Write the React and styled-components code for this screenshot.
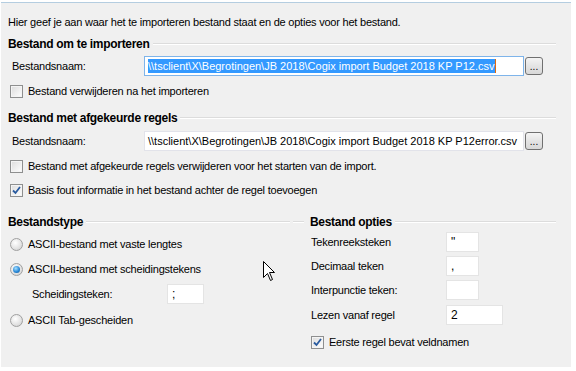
import React from "react";
import styled, { createGlobalStyle, css } from "styled-components";

const Global = createGlobalStyle`
  html, body { margin: 0; padding: 0; background: #ffffff; }
  body { font-family: "Liberation Sans", Tahoma, sans-serif; font-size: 11px; color: #000; letter-spacing: -0.22px; }
`;

const Panel = styled.div`
  position: relative;
  width: 570px;
  height: 365px;
  margin: 2px 5px 3px 1px;
  border-top: 1px solid #b4cde0;
  background: #f0f0f0;
  box-sizing: border-box;
  padding-top: 12px;
  display: flex;
  flex-direction: column;
`;

const Intro = styled.div`
  margin-left: 7px;
  line-height: 14px;
  height: 14px;
`;

const Section = styled.div`
  display: flex;
  flex-direction: column;
  margin-top: ${(p) => p.$mt || 0}px;
`;

const GroupHeader = styled.div`
  display: flex;
  align-items: center;
  height: 14px;
  line-height: 14px;
  font-weight: bold;
  font-size: 12px;
  letter-spacing: -0.3px;
  padding-left: ${(p) => p.$pl ?? 7}px;
  margin-right: ${(p) => p.$mr ?? 15}px;
  white-space: nowrap;
  ${(p) =>
    p.$leadLine &&
    css`
      &::before {
        content: "";
        width: 11px;
        margin-right: 6px;
        border-top: 1px solid #dcdcdc;
        border-bottom: 1px solid #ffffff;
      }
    `}
  &::after {
    content: "";
    flex: 1;
    margin-left: 3px;
    border-top: 1px solid #dcdcdc;
    border-bottom: 1px solid #ffffff;
  }
`;

const FileRow = styled.div`
  display: flex;
  align-items: center;
  margin-top: ${(p) => p.$mt}px;
  padding-left: 11px;
  height: 20px;
`;

const Label = styled.div`
  width: ${(p) => p.$w}px;
  flex: none;
  white-space: nowrap;
`;

const PathInput = styled.div`
  width: 380px;
  height: 20px;
  box-sizing: border-box;
  background: #fff;
  border: 1px solid ${(p) => (p.$focus ? "#7eb4ea" : "#e2e3ea")};
  padding: 0 0 0 3px;
  display: flex;
  align-items: center;
  white-space: nowrap;
  overflow: hidden;
  letter-spacing: 0;
`;

const Selected = styled.span`
  background: #3399ff;
  color: #fff;
  line-height: 14px;
  border-right: 1px solid #e06a10;
`;

const BrowseButton = styled.div`
  width: 18px;
  height: 18px;
  margin-left: 1px;
  box-sizing: border-box;
  border: 1px solid #707070;
  border-radius: 3px;
  background: linear-gradient(#f4f4f4, #e4e4e4 50%, #d8d8d8);
  display: flex;
  justify-content: center;
  align-items: flex-end;
  font-size: 10px;
  line-height: 12px;
  padding-bottom: 1px;
  letter-spacing: 0;
`;

const CheckRow = styled.div`
  display: flex;
  align-items: center;
  height: 16px;
  margin-top: ${(p) => p.$mt}px;
  padding-left: ${(p) => p.$pl ?? 9}px;
  gap: 5px;
  white-space: nowrap;
`;

const Box = styled.span`
  width: 13px;
  height: 13px;
  box-sizing: border-box;
  border: 1px solid #8e8f8f;
  background: linear-gradient(135deg, #dcdcdc, #f4f4f4 70%, #ffffff);
  box-shadow: inset 0 0 0 1px #f4f4f4;
  flex: none;
  display: flex;
  align-items: center;
  justify-content: center;
`;

const Radio = styled.span`
  width: 13px;
  height: 13px;
  box-sizing: border-box;
  border-radius: 50%;
  border: 1px solid #a0a0a0;
  background: radial-gradient(circle at 40% 35%, #ffffff, #e2e2e2 60%, #c8c8c8);
  flex: none;
  display: flex;
  align-items: center;
  justify-content: center;
  &::after {
    content: "";
    display: ${(p) => (p.$on ? "block" : "none")};
    width: 7px;
    height: 7px;
    border-radius: 50%;
    background: radial-gradient(circle at 40% 35%, #a6e0ff, #2b8ad8 55%, #0d4f8f);
  }
`;

const Columns = styled.div`
  display: grid;
  grid-template-columns: 289px 1fr;
  margin-top: 17px;
  padding-right: 15px;
`;

const Column = styled.div`
  display: flex;
  flex-direction: column;
`;

const SubRow = styled.div`
  display: flex;
  align-items: center;
  height: 20px;
  margin-top: ${(p) => p.$mt}px;
  padding-left: ${(p) => p.$pl}px;
`;

const SmallInput = styled.div`
  width: ${(p) => p.$w}px;
  height: 20px;
  box-sizing: border-box;
  background: #fff;
  border: 1px solid #e4e4e4;
  padding-left: 4px;
  display: flex;
  align-items: center;
  font-size: 12px;
`;

const Cursor = styled.svg`
  position: absolute;
  left: 262px;
  top: 258px;
`;

function Check({ on }) {
  return (
    <Box>
      {on && (
        <svg width="9" height="9" viewBox="0 0 9 9">
          <path d="M1 4.5 L3.5 7 L8 1" fill="none" stroke="#2a5b9f" strokeWidth="1.8" />
        </svg>
      )}
    </Box>
  );
}

export default function App() {
  return (
    <>
      <Global />
      <Panel>
        <Intro>Hier geef je aan waar het te importeren bestand staat en de opties voor het bestand.</Intro>

        <Section $mt={8}>
          <GroupHeader>Bestand om te importeren</GroupHeader>
          <FileRow $mt={5}>
            <Label $w={132}>Bestandsnaam:</Label>
            <PathInput $focus>
              <Selected>\\tsclient\X\Begrotingen\JB 2018\Cogix import Budget 2018 KP P12.csv</Selected>
            </PathInput>
            <BrowseButton>...</BrowseButton>
          </FileRow>
          <CheckRow $mt={7}>
            <Check />
            Bestand verwijderen na het importeren
          </CheckRow>
        </Section>

        <Section $mt={12}>
          <GroupHeader>Bestand met afgekeurde regels</GroupHeader>
          <FileRow $mt={6}>
            <Label $w={132}>Bestandsnaam:</Label>
            <PathInput>\\tsclient\X\Begrotingen\JB 2018\Cogix import Budget 2018 KP P12error.csv</PathInput>
            <BrowseButton>...</BrowseButton>
          </FileRow>
          <CheckRow $mt={7}>
            <Check />
            Bestand met afgekeurde regels verwijderen voor het starten van de import.
          </CheckRow>
          <CheckRow $mt={8}>
            <Check on />
            Basis fout informatie in het bestand achter de regel toevoegen
          </CheckRow>
        </Section>

        <Columns>
          <Column>
            <GroupHeader $mr={0}>Bestandstype</GroupHeader>
            <CheckRow $mt={7}>
              <Radio />
              ASCII-bestand met vaste lengtes
            </CheckRow>
            <CheckRow $mt={9}>
              <Radio $on />
              ASCII-bestand met scheidingstekens
            </CheckRow>
            <SubRow $mt={7} $pl={31}>
              <Label $w={135}>Scheidingsteken:</Label>
              <SmallInput $w={37}>;</SmallInput>
            </SubRow>
            <CheckRow $mt={8}>
              <Radio />
              ASCII Tab-gescheiden
            </CheckRow>
          </Column>
          <Column>
            <GroupHeader $pl={3} $mr={0} $leadLine>
              Bestand opties
            </GroupHeader>
            <SubRow $mt={3} $pl={21}>
              <Label $w={135}>Tekenreeksteken</Label>
              <SmallInput $w={33}>"</SmallInput>
            </SubRow>
            <SubRow $mt={4} $pl={21}>
              <Label $w={135}>Decimaal teken</Label>
              <SmallInput $w={33}>,</SmallInput>
            </SubRow>
            <SubRow $mt={4} $pl={21}>
              <Label $w={135}>Interpunctie teken:</Label>
              <SmallInput $w={33} />
            </SubRow>
            <SubRow $mt={5} $pl={21}>
              <Label $w={135}>Lezen vanaf regel</Label>
              <SmallInput $w={57}>2</SmallInput>
            </SubRow>
            <CheckRow $mt={9} $pl={21}>
              <Check on />
              Eerste regel bevat veldnamen
            </CheckRow>
          </Column>
        </Columns>

        <Cursor width="13" height="21" viewBox="0 0 13 21">
          <path
            d="M0.5 0.5 L0.5 16.5 L4.5 12.5 L7.5 19.5 L9.5 18.5 L6.5 11.5 L11.5 11.5 Z"
            fill="#ffffff"
            stroke="#000000"
            strokeWidth="1"
          />
        </Cursor>
      </Panel>
    </>
  );
}
